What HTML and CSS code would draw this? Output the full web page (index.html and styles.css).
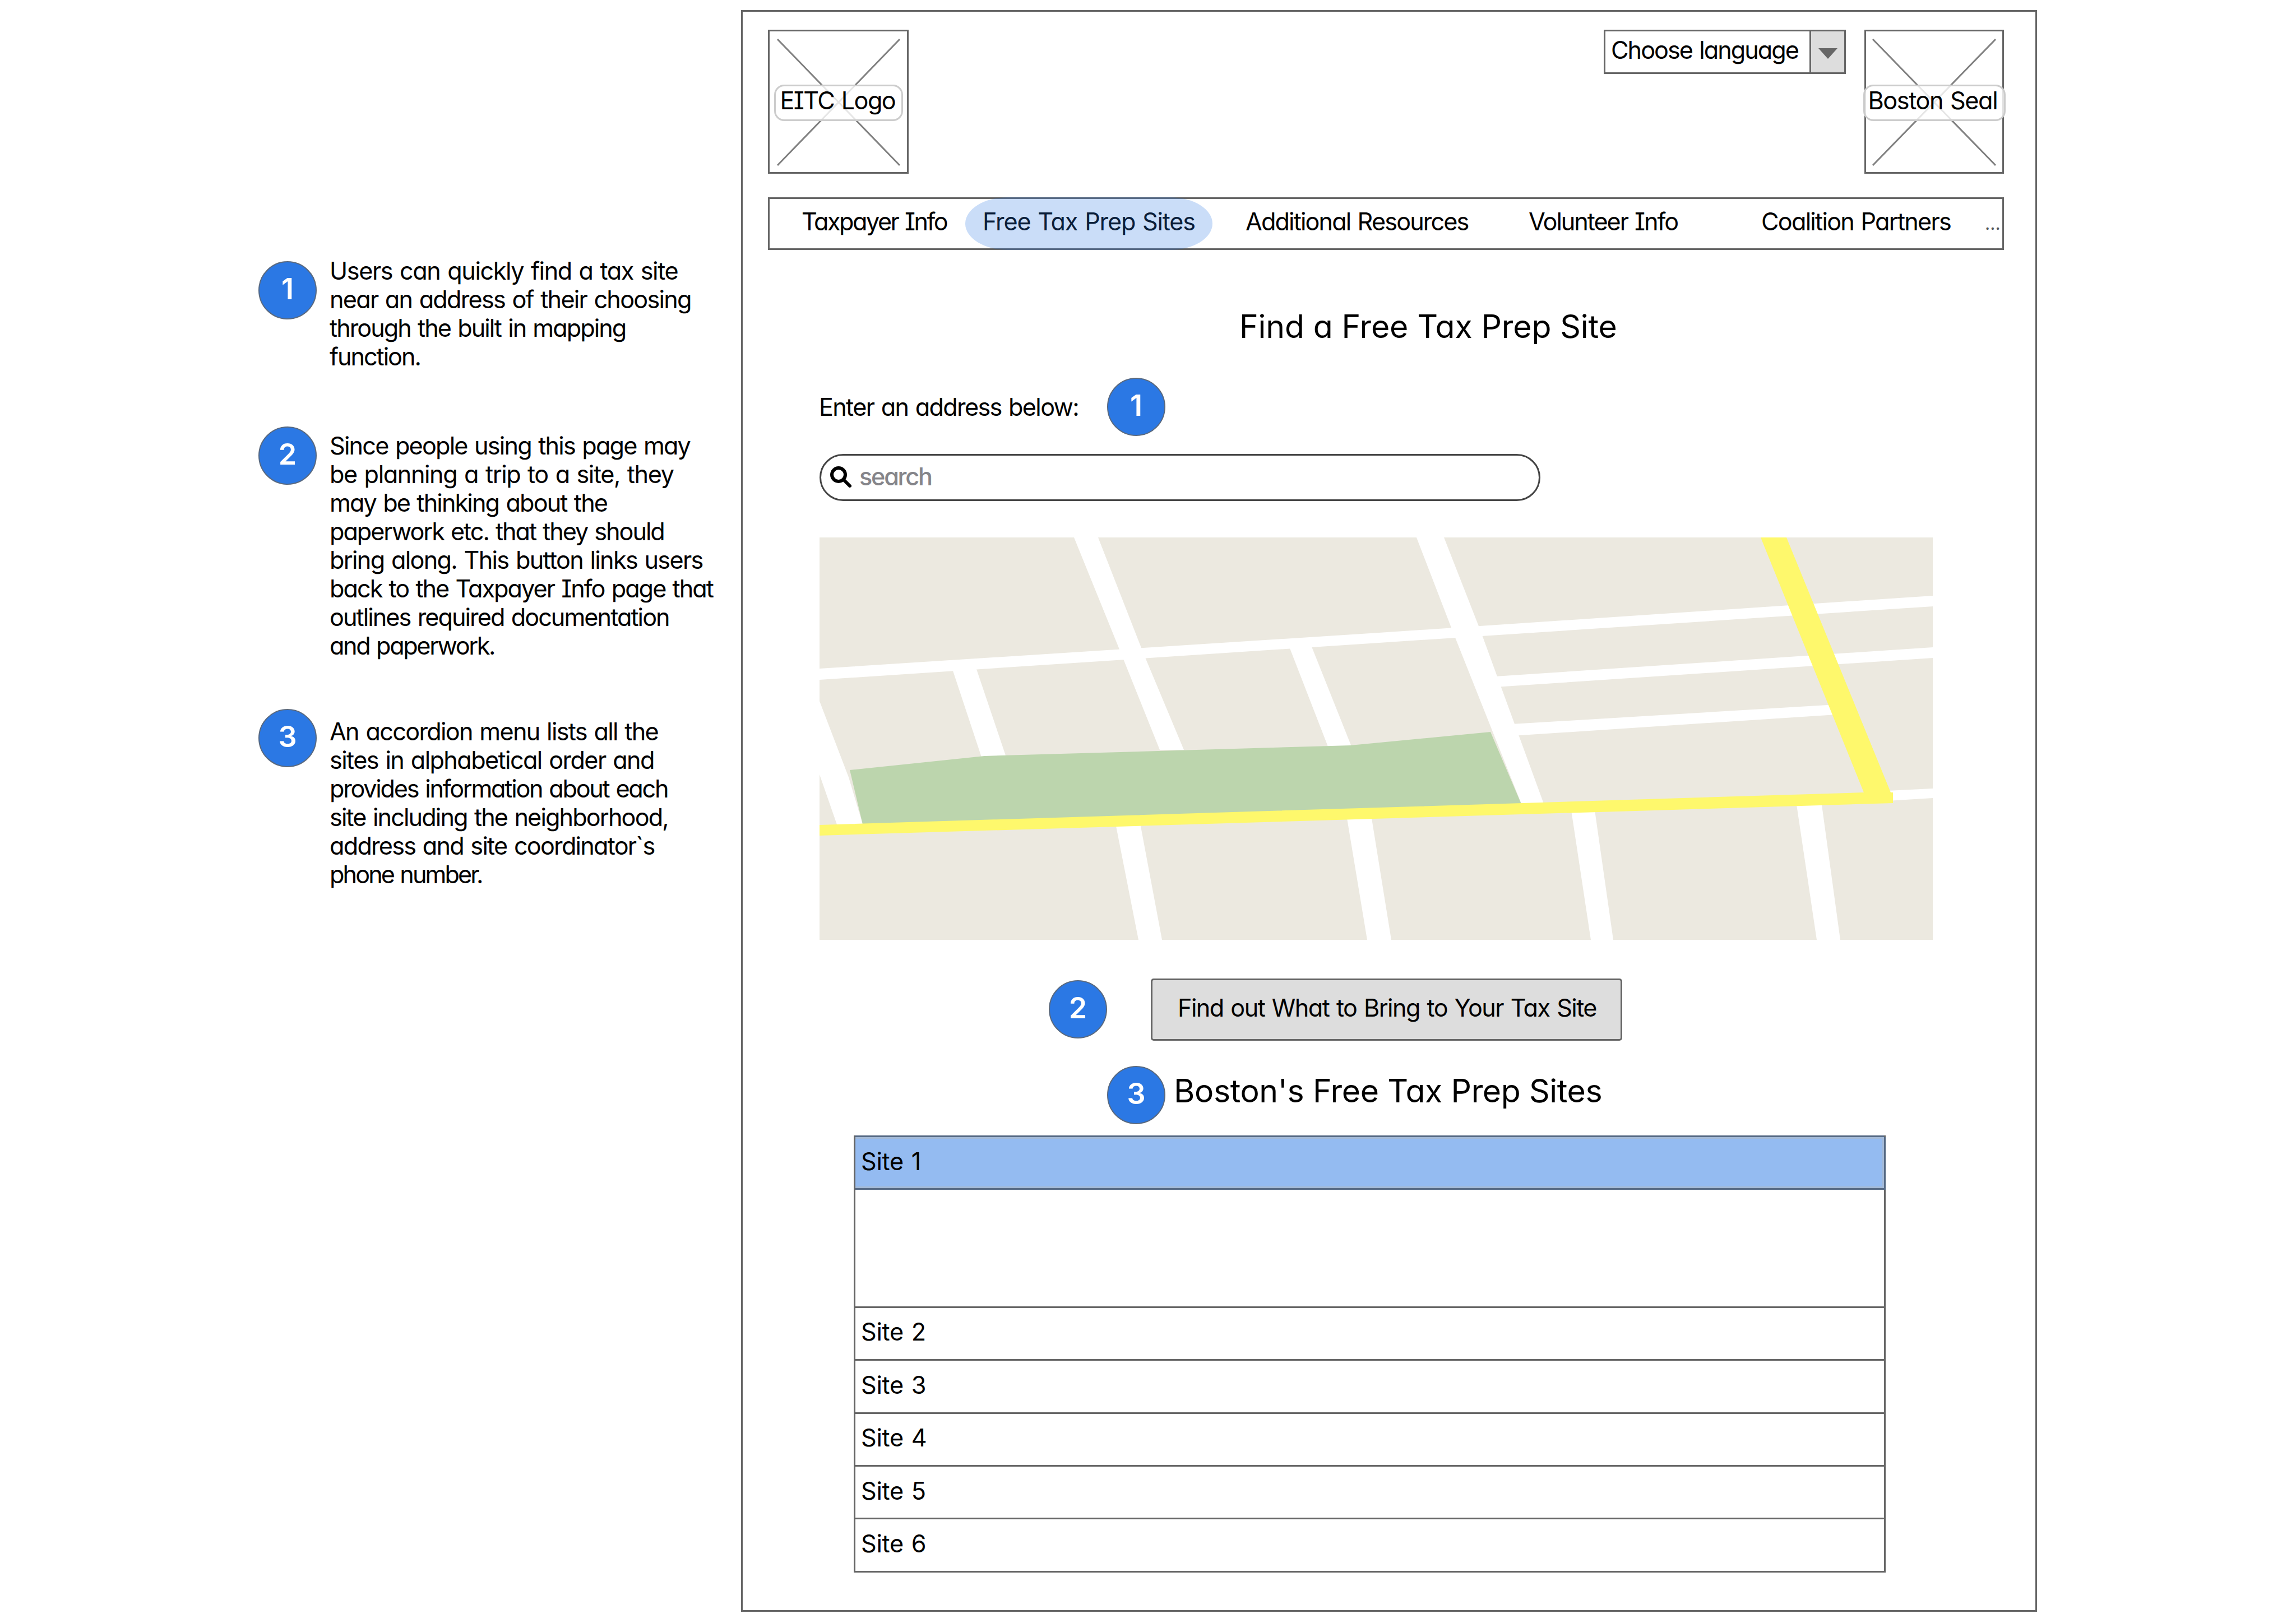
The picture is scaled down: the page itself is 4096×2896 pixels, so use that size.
FILE: index.html
```html
<!DOCTYPE html>
<html lang="en">
<head>
<meta charset="utf-8">
<title>Free Tax Prep Sites</title>
<link rel="stylesheet" href="styles.css">
</head>
<body>
<div class="board">
  <aside class="notes">
    <div class="note note-first">
      <span class="badge">1</span>
      <p class="note-text">
        <span class="line ls-139">Users can quickly find a tax site</span>
        <span class="line ls-175">near an address of their choosing</span>
        <span class="line ls-197">through the built in mapping</span>
        <span class="line ls-204">function.</span>
      </p>
    </div>
    <div class="note note-second">
      <span class="badge">2</span>
      <p class="note-text">
        <span class="line ls-180">Since people using this page may</span>
        <span class="line ls-139">be planning a trip to a site, they</span>
        <span class="line ls-187">may be thinking about the</span>
        <span class="line ls-204">paperwork etc. that they should</span>
        <span class="line ls-168">bring along. This button links users</span>
        <span class="line ls-197">back to the Taxpayer Info page that</span>
        <span class="line ls-194">outlines required documentation</span>
        <span class="line ls-236">and paperwork.</span>
      </p>
    </div>
    <div class="note note-third">
      <span class="badge">3</span>
      <p class="note-text">
        <span class="line ls-168">An accordion menu lists all the</span>
        <span class="line ls-160">sites in alphabetical order and</span>
        <span class="line ls-224">provides information about each</span>
        <span class="line ls-187">site including the neighborhood,</span>
        <span class="line ls-175">address and site coordinator`s</span>
        <span class="line ls-290">phone number.</span>
      </p>
    </div>
  </aside>

  <main class="page">
    <header class="header">
      <div class="placeholder logo">
        <svg class="cross" viewBox="0 0 245 251" preserveAspectRatio="none"><path d="M14 14L232 239M232 14L14 239"/></svg>
        <span class="tag ls-160">EITC Logo</span>
      </div>
      <div class="select">
        <span class="select-value ls-197">Choose language</span>
        <span class="select-arrow"><svg width="34" height="19" viewBox="0 0 34 19"><path d="M0 0H34L17 19Z"/></svg></span>
      </div>
      <div class="placeholder seal">
        <svg class="cross" viewBox="0 0 243 251" preserveAspectRatio="none"><path d="M12 14L231 239M231 14L12 239"/></svg>
        <span class="tag ls-139">Boston Seal</span>
      </div>
    </header>

    <nav class="nav">
      <a class="nav-item ls-249">Taxpayer Info</a>
      <a class="nav-item nav-active ls-120">Free Tax Prep Sites</a>
      <a class="nav-item ls-187">Additional Resources</a>
      <a class="nav-item ls-204">Volunteer Info</a>
      <a class="nav-item ls-175">Coalition Partners</a>
      <span class="nav-item nav-more">...</span>
    </nav>

    <section class="content">
      <h1 class="title find-title">Find a Free Tax Prep Site</h1>
      <div class="prompt">
        <label class="prompt-label ls-168">Enter an address below:</label>
        <span class="badge">1</span>
      </div>
      <div class="search">
        <svg class="search-icon" width="40" height="40" viewBox="0 0 40 40"><circle cx="15" cy="15" r="12"/><path d="M24 24L35 35"/></svg>
        <span class="search-text ls-224">search</span>
      </div>
      <svg class="map" viewBox="0 0 1986 718">
        <rect width="1986" height="718" fill="#ece9e0"/>
        <g fill="#fff">
          <path d="M454 0H497L578 207L650 379H607L538 207Z"/>
          <path d="M0 234L998 170L1986 104V123L998 188L0 254Z"/>
          <path d="M237 235H280L333 392H289Z"/>
          <path d="M836 190H876L949 373H907Z"/>
          <path d="M0 292L52 428L78 515H32L0 423Z"/>
          <path d="M1065 0H1114L1179 166L1292 475H1252L1129 166Z"/>
          <path d="M1205 248L1986 196V215L1205 267Z"/>
          <path d="M1235 333L1815 298V316L1235 354Z"/>
          <path d="M1905 452L1986 448V465L1905 470Z"/>
          <path d="M528 510H572L611 718H569Z"/>
          <path d="M940 495H984L1020 718H977Z"/>
          <path d="M1340 480H1382L1416 718H1376Z"/>
          <path d="M1742 470H1787L1821 718H1779Z"/>
        </g>
        <path fill="#bcd5ad" d="M54 415L294 390L947 371L1197 347L1253 478L78 516Z"/>
        <path fill="#fef86c" d="M0 513L1863 455L1679 0H1725L1911 455H1915V474L0 532Z"/>
      </svg>
      <div class="bring">
        <span class="badge">2</span>
        <button class="button">Find out What to Bring to Your Tax Site</button>
      </div>
      <div class="sites-heading">
        <span class="badge">3</span>
        <h2 class="title sites-title">Boston's Free Tax Prep Sites</h2>
      </div>
      <div class="accordion">
        <div class="row row-open">Site 1</div>
        <div class="panel"></div>
        <div class="row">Site 2</div>
        <div class="row">Site 3</div>
        <div class="row">Site 4</div>
        <div class="row">Site 5</div>
        <div class="row">Site 6</div>
      </div>
    </section>
  </main>
</div>
</body>
</html>
```
FILE: styles.css
```css
* { box-sizing: border-box; }

body {
  margin: 0;
  background: #fff;
  color: #000;
  font: 400 43.2px/51px Inter, "Liberation Sans", sans-serif;
  word-spacing: 2px;
  /* single-storey a, capital I with serifs */
  font-feature-settings: "cv11", "cv08";
}

.board {
  display: flex;
  align-items: flex-start;
  width: 4096px;
  height: 2896px;
  overflow: hidden;
}

/* tracking, in hundredths of a pixel */
.ls-120 { letter-spacing: -1.2px; }
.ls-139 { letter-spacing: -1.39px; }
.ls-160 { letter-spacing: -1.6px; }
.ls-168 { letter-spacing: -1.68px; }
.ls-175 { letter-spacing: -1.75px; }
.ls-180 { letter-spacing: -1.8px; }
.ls-187 { letter-spacing: -1.87px; }
.ls-194 { letter-spacing: -1.94px; }
.ls-197 { letter-spacing: -1.97px; }
.ls-204 { letter-spacing: -2.04px; }
.ls-224 { letter-spacing: -2.24px; }
.ls-236 { letter-spacing: -2.36px; }
.ls-249 { letter-spacing: -2.49px; }
.ls-290 { letter-spacing: -2.9px; }

.badge {
  flex: none;
  display: flex;
  align-items: center;
  justify-content: center;
  width: 104px;
  height: 104px;
  padding-bottom: 5px;
  border: 2px solid #59697f;
  border-radius: 50%;
  background: #2b78e4;
  color: #fff;
  font-size: 52px;
  font-weight: 600;
}

/* annotations */
.notes {
  flex: none;
  width: 1322px;
  padding: 456px 0 0 461px;
}
.note { display: flex; align-items: flex-start; gap: 23px; }
.note-text { margin: 0; }
.line { display: block; white-space: nowrap; }
.note-first { padding-top: 2px; }
.note-first .badge { margin-top: 8px; }
.note-second { margin-top: 99px; }
.note-second .note-text { margin-top: 9px; }
.note-third { margin-top: 87px; }
.note-third .note-text { margin-top: 15px; }

/* page frame */
.page {
  width: 2312px;
  height: 2858px;
  margin-top: 18px;
  padding: 32px 56px 0 45px;
  border: 3px solid #666;
}

.header { display: flex; align-items: flex-start; }
.placeholder {
  position: relative;
  display: flex;
  align-items: center;
  justify-content: center;
  height: 257px;
  border: 3px solid #666;
}
.logo { width: 251px; }
.seal { width: 249px; margin-left: 33px; }
.cross {
  position: absolute;
  inset: 0;
  width: 100%;
  height: 100%;
  fill: none;
  stroke: #808080;
  stroke-width: 3;
}
.tag {
  position: relative;
  flex: none;
  height: 65px;
  margin-top: 3px;
  padding-left: 8px;
  border: 3px solid #ccc;
  border-radius: 18px;
  background: rgba(255, 255, 255, 0.8);
  white-space: nowrap;
}
.logo .tag { width: 230px; }
.seal .tag { width: 254px; padding-left: 6px; }

.select {
  display: flex;
  width: 432px;
  height: 79px;
  margin-left: auto;
  border: 3px solid #666;
}
.select-value {
  flex: 1;
  display: flex;
  align-items: center;
  padding: 0 0 6px 10px;
  white-space: nowrap;
}
.select-arrow {
  display: flex;
  align-items: center;
  justify-content: center;
  width: 62px;
  padding-top: 6px;
  border-left: 3px solid #666;
  background: #ddd;
  fill: #666;
}

.nav {
  display: grid;
  grid-template-columns: 292px 441px 564px 415px 399px auto;
  height: 94px;
  margin-top: 42px;
  padding-left: 57px;
  border: 3px solid #666;
  white-space: nowrap;
}
.nav-item {
  display: flex;
  align-items: center;
  padding-bottom: 8px;
}
.nav-active { position: relative; justify-content: center; }
.nav-active::after {
  content: "";
  position: absolute;
  inset: -3px 0;
  border-radius: 76px / 47px;
  background: rgba(43, 120, 228, 0.25);
}
.nav-active + .nav-item { padding-left: 59px; }
.nav-more { color: #555; font-size: 32px; padding-bottom: 1px; }

/* content */
.content { padding-left: 90px; }
.title {
  margin: 0;
  font-size: 57.2px;
  font-weight: 400;
  line-height: 70px;
  word-spacing: 0;
  white-space: nowrap;
}
.find-title { margin: 102px 0 0 751px; letter-spacing: -0.15px; }

.prompt { display: flex; align-items: center; margin-top: 56px; }
.prompt-label { width: 515px; padding-left: 1px; }

.search {
  display: flex;
  align-items: center;
  width: 1286px;
  height: 84px;
  margin: 32px 0 0 2px;
  padding-left: 16px;
  border: 3px solid #444;
  border-radius: 42px;
}
.search-icon { fill: none; stroke: #000; stroke-width: 6; stroke-linecap: round; }
.search-text { padding: 0 0 4px 12px; color: #85858a; font-weight: 500; }

.map { display: block; width: 1986px; height: 718px; margin: 65px 0 0 2px; }

.bring {
  display: flex;
  align-items: flex-start;
  gap: 78px;
  margin: 69px 0 0 411px;
}
.bring .badge { margin-top: 3px; }
.button {
  width: 841px;
  height: 111px;
  padding: 0 0 6px 2px;
  border: 3px solid #666;
  border-radius: 5px;
  background: #ddd;
  color: #000;
  font: inherit;
  font-feature-settings: inherit;
  letter-spacing: -1.55px;
  word-spacing: inherit;
  white-space: nowrap;
}

.sites-heading {
  display: flex;
  align-items: flex-start;
  gap: 15px;
  margin: 45px 0 0 515px;
}
.sites-title { margin-top: 10px; letter-spacing: -0.4px; }

.accordion {
  width: 1841px;
  margin: 20px 0 0 63px;
  border: 3px solid #666;
  border-bottom: 0;
}
.row {
  display: flex;
  align-items: center;
  height: 94.4px;
  padding: 0 0 5px 10px;
  border-bottom: 3px solid #666;
  letter-spacing: -0.3px;
}
.row-open {
  border-bottom-color: #566a85;
  background: #94bbf1;
  box-shadow: 0 -3px #566a85, 3px 0 #566a85, inset 0 3px #a3b9d6, inset 0 -3px #a3b9d6, inset -3px 0 #a3b9d6;
}
.panel { height: 210.4px; border-bottom: 3px solid #666; }
```
